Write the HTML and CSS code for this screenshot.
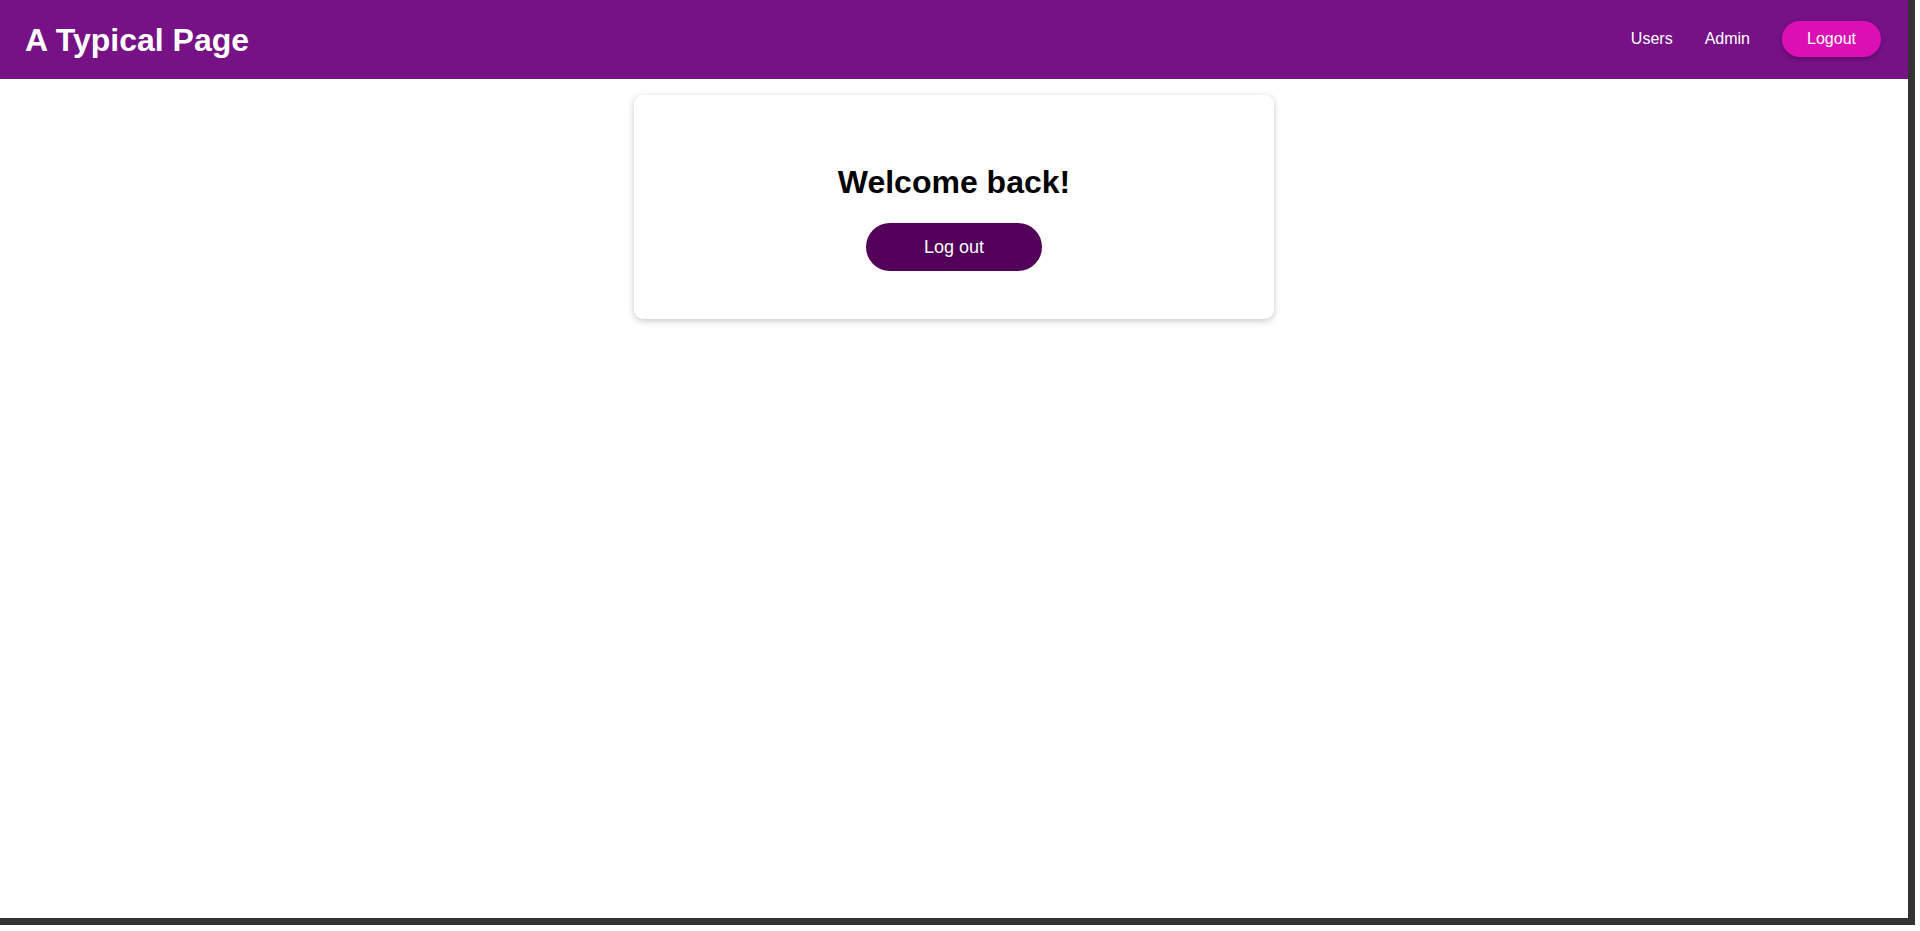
FILE: index.html
```html
<!DOCTYPE html>
<html lang="en">
<head>
<meta charset="utf-8">
<title>A Typical Page</title>
<link rel="stylesheet" href="styles.css">
</head>
<body>
<div class="frame">
  <header class="topbar">
    <div class="brand">A Typical Page</div>
    <nav class="nav">
      <a class="nav-link" href="#">Users</a>
      <a class="nav-link" href="#">Admin</a>
      <a class="nav-btn" href="#">Logout</a>
    </nav>
  </header>
  <main class="main">
    <section class="card">
      <h1 class="card-title">Welcome back!</h1>
      <button class="logout-btn" type="button">Log out</button>
    </section>
  </main>
</div>
</body>
</html>
```
FILE: styles.css
```css
html, body {
  margin: 0;
  padding: 0;
  background: #ffffff;
  overflow: hidden;
}
body {
  font-family: "Liberation Sans", Arial, sans-serif;
  width: 1920px;
  height: 931px;
}
.frame {
  width: 1908px;
  height: 918px;
  border-right: 7px solid #333333;
  border-bottom: 7px solid #333333;
  display: flex;
  flex-direction: column;
}
.topbar {
  height: 79px;
  flex: none;
  background: #761186;
  display: flex;
  align-items: center;
  justify-content: space-between;
  padding: 0 27px 0 25px;
  box-sizing: border-box;
}
.brand {
  color: #ffffff;
  font-size: 32px;
  font-weight: bold;
  margin-top: 1px;
}
.nav {
  display: flex;
  align-items: center;
  gap: 32px;
  margin-bottom: 2px;
}
.nav-link {
  color: #ffffff;
  text-decoration: none;
  font-size: 16px;
}
.nav-btn {
  color: #ffffff;
  text-decoration: none;
  font-size: 16px;
  background: #dc0fb5;
  height: 36px;
  width: 99px;
  border-radius: 18px;
  display: flex;
  align-items: center;
  justify-content: center;
  box-shadow: 0 2px 4px rgba(0, 0, 0, 0.25);
}
.main {
  display: flex;
  justify-content: center;
  padding-top: 16px;
}
.card {
  width: 640px;
  height: 224px;
  box-sizing: border-box;
  background: #ffffff;
  border-radius: 9px;
  box-shadow: 0 2px 7px rgba(0, 0, 0, 0.22);
  display: flex;
  flex-direction: column;
  align-items: center;
  padding-top: 69px;
}
.card-title {
  margin: 0;
  font-size: 32px;
  font-weight: bold;
  color: #000000;
  line-height: 37px;
}
.logout-btn {
  margin-top: 22px;
  width: 176px;
  height: 48px;
  border: none;
  border-radius: 24px;
  background: #52005a;
  color: #ffffff;
  font-family: "Liberation Sans", Arial, sans-serif;
  font-size: 18px;
  cursor: pointer;
}
```
